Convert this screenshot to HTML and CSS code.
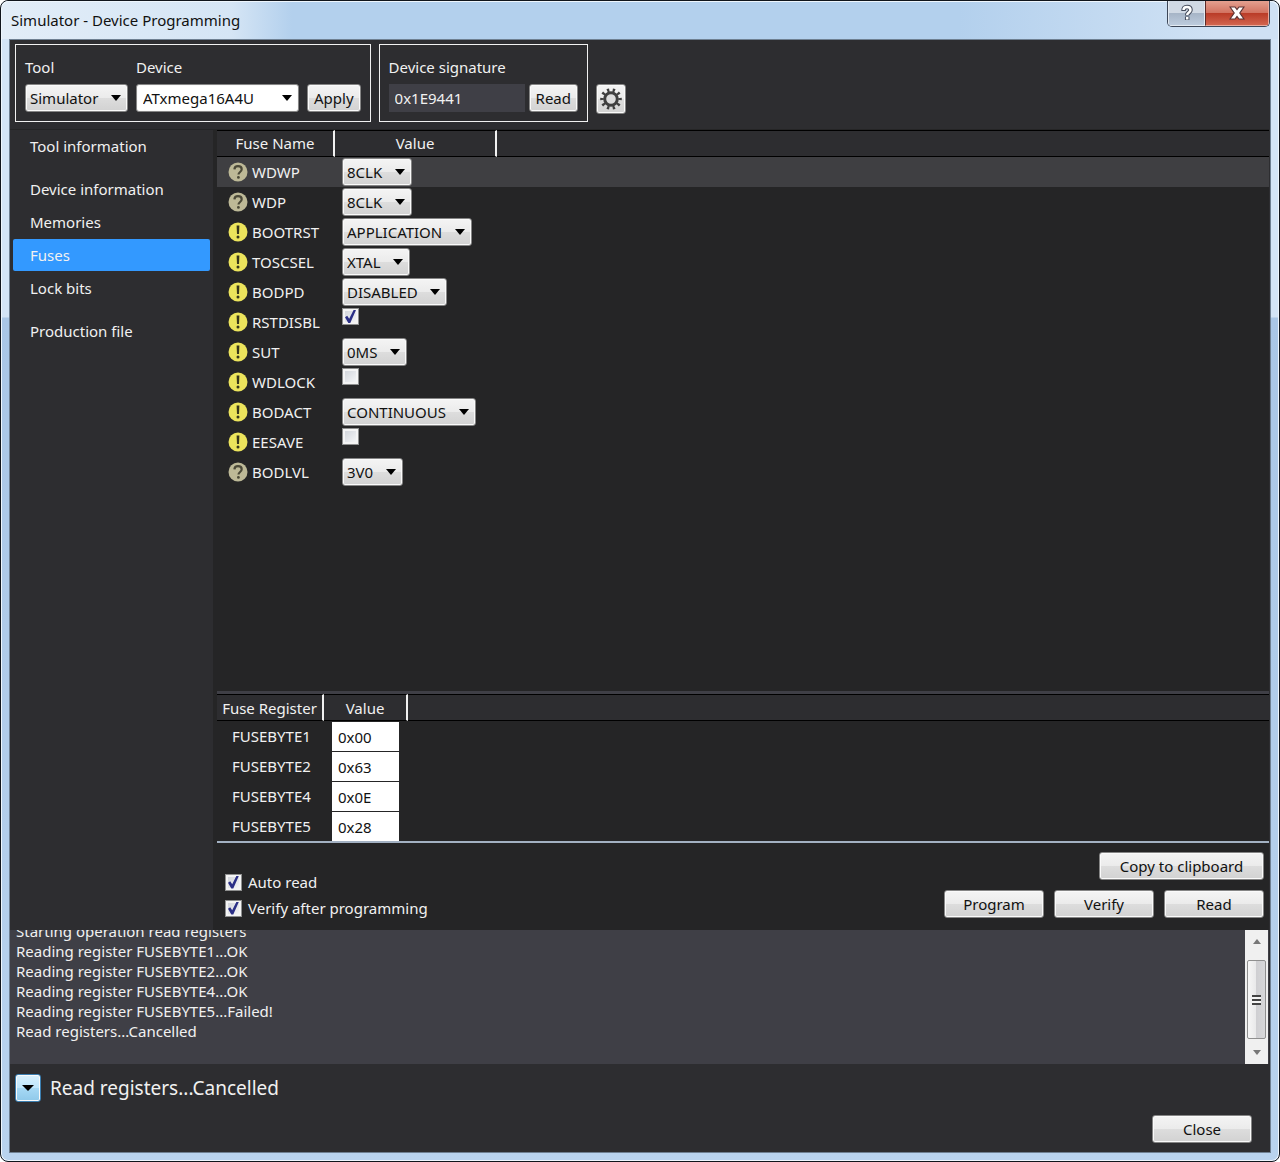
FILE: index.html
```
<!DOCTYPE html>
<html lang="en">
<head>
<meta charset="UTF-8">
<title>Simulator - Device Programming</title>
<link rel="stylesheet" href="styles.css">
</head>
<body>
	<svg class="defs" width="0" height="0">
		<symbol id="unknown" viewBox="0 0 20 20">
			<circle cx="10" cy="10" r="9.5" fill="#bdb997" />
			<path d="M6.4 7.4C6.5 5 8 4.2 10 4.2c2.2 0 3.7 1.2 3.7 3.1 0 2.7-3.2 2.7-3.2 5.2" fill="none" stroke="#4b4938" stroke-width="2.2" />
			<circle cx="10.4" cy="15.4" r="1.4" fill="#4b4938" />
		</symbol>
		<symbol id="warn" viewBox="0 0 20 20">
			<circle cx="10" cy="10" r="9.5" fill="#ece45c" />
			<path d="M8.6 3.500h2.800l-.4 8.500H9z" fill="#38361c" />
			<circle cx="10" cy="15" r="1.5" fill="#38361c" />
		</symbol>
	</svg>

	<div id="window">
		<header class="titlebar">
			<h1>Simulator - Device Programming</h1>
			<div class="caption">
				<button type="button" class="help" aria-label="Help">
					<svg width="16" height="18" viewBox="0 0 16 18">
						<path d="M4.5 7C4.5 4 6 3 8 3s3.500 1 3.500 3c0 2.500-3.300 2.300-3.300 5.500M8.200 12.500v3.500" fill="none" stroke="#454c5c" stroke-width="4.5" />
						<path d="M4.5 6C4.5 3.800 6 3 8 3s3.500 1 3.500 3c0 2.500-3.300 2.300-3.300 5M8.200 13v2.500" fill="none" stroke="#fff" stroke-width="2.5" />
					</svg>
				</button>
				<button type="button" class="exit" aria-label="Close window">
					<svg width="16" height="14" viewBox="0 0 16 14">
						<path d="M1 1h5l2 2.500L10 1h5l-4.200 6L15 13h-5l-2-2.500L6 13H1l4.200-6z" fill="#fff" stroke="#5d3434" stroke-width="1.2" />
					</svg>
				</button>
			</div>
		</header>

		<div id="content">
			<form class="toolbar">
				<div class="group">
					<div class="field">
						<label for="tool">Tool</label>
						<span class="combo"><select id="tool"><option>Simulator</option></select></span>
					</div>
					<div class="field">
						<label for="device">Device</label>
						<span class="combo edit"><select id="device"><option>ATxmega16A4U</option></select></span>
					</div>
					<button type="button">Apply</button>
				</div>
				<div class="group signature">
					<div class="field">
						<label for="signature">Device signature</label>
						<input type="text" id="signature" value="0x1E9441" readonly>
					</div>
					<button type="button">Read</button>
				</div>
				<button type="button" class="settings" aria-label="Settings">
					<svg width="24" height="24" viewBox="0 0 24 24" fill="none" stroke="#3f3f3f">
						<circle cx="12" cy="12" r="9" stroke-width="3.6" pathLength="20" stroke-dasharray="0.8 1.2" stroke-dashoffset="0.4" />
						<circle cx="12" cy="12" r="6.3" fill="#dcdcdc" stroke-width="3" />
					</svg>
				</button>
			</form>

			<div class="middle">
				<nav>
					<a href="#tool-info" class="last">Tool information</a>
					<a href="#device-info">Device information</a>
					<a href="#memories">Memories</a>
					<a href="#fuses" class="active">Fuses</a>
					<a href="#lock-bits" class="last">Lock bits</a>
					<a href="#production">Production file</a>
				</nav>

				<main>
					<div class="fuse-list">
						<table class="fuses">
							<thead>
								<tr><th>Fuse Name</th><th>Value</th><th class="rest"></th></tr>
							</thead>
							<tbody>
								<tr class="selected">
									<td><label for="wdwp"><svg><use href="#unknown" /></svg>WDWP</label></td>
									<td><span class="combo"><select id="wdwp"><option>8CLK</option></select></span></td>
									<td></td>
								</tr>
								<tr>
									<td><label for="wdp"><svg><use href="#unknown" /></svg>WDP</label></td>
									<td><span class="combo"><select id="wdp"><option>8CLK</option></select></span></td>
									<td></td>
								</tr>
								<tr>
									<td><label for="bootrst"><svg><use href="#warn" /></svg>BOOTRST</label></td>
									<td><span class="combo"><select id="bootrst"><option>APPLICATION</option></select></span></td>
									<td></td>
								</tr>
								<tr>
									<td><label for="toscsel"><svg><use href="#warn" /></svg>TOSCSEL</label></td>
									<td><span class="combo"><select id="toscsel"><option>XTAL</option></select></span></td>
									<td></td>
								</tr>
								<tr>
									<td><label for="bodpd"><svg><use href="#warn" /></svg>BODPD</label></td>
									<td><span class="combo"><select id="bodpd"><option>DISABLED</option></select></span></td>
									<td></td>
								</tr>
								<tr>
									<td><label for="rstdisbl"><svg><use href="#warn" /></svg>RSTDISBL</label></td>
									<td><input type="checkbox" id="rstdisbl" checked></td>
									<td></td>
								</tr>
								<tr>
									<td><label for="sut"><svg><use href="#warn" /></svg>SUT</label></td>
									<td><span class="combo"><select id="sut"><option>0MS</option></select></span></td>
									<td></td>
								</tr>
								<tr>
									<td><label for="wdlock"><svg><use href="#warn" /></svg>WDLOCK</label></td>
									<td><input type="checkbox" id="wdlock"></td>
									<td></td>
								</tr>
								<tr>
									<td><label for="bodact"><svg><use href="#warn" /></svg>BODACT</label></td>
									<td><span class="combo"><select id="bodact"><option>CONTINUOUS</option></select></span></td>
									<td></td>
								</tr>
								<tr>
									<td><label for="eesave"><svg><use href="#warn" /></svg>EESAVE</label></td>
									<td><input type="checkbox" id="eesave"></td>
									<td></td>
								</tr>
								<tr>
									<td><label for="bodlvl"><svg><use href="#unknown" /></svg>BODLVL</label></td>
									<td><span class="combo"><select id="bodlvl"><option>3V0</option></select></span></td>
									<td></td>
								</tr>
							</tbody>
						</table>
					</div>

					<div class="register-list">
						<table class="registers">
							<thead>
								<tr><th>Fuse Register</th><th>Value</th><th class="rest"></th></tr>
							</thead>
							<tbody>
								<tr>
									<td><label for="byte1">FUSEBYTE1</label></td>
									<td><input type="text" id="byte1" value="0x00"></td>
									<td></td>
								</tr>
								<tr>
									<td><label for="byte2">FUSEBYTE2</label></td>
									<td><input type="text" id="byte2" value="0x63"></td>
									<td></td>
								</tr>
								<tr>
									<td><label for="byte4">FUSEBYTE4</label></td>
									<td><input type="text" id="byte4" value="0x0E"></td>
									<td></td>
								</tr>
								<tr>
									<td><label for="byte5">FUSEBYTE5</label></td>
									<td><input type="text" id="byte5" value="0x28"></td>
									<td></td>
								</tr>
							</tbody>
						</table>
					</div>

					<div class="actions">
						<div class="options">
							<label><input type="checkbox" checked>Auto read</label>
							<label><input type="checkbox" checked>Verify after programming</label>
						</div>
						<div class="buttons">
							<button type="button" class="copy">Copy to clipboard</button>
							<div class="row">
								<button type="button">Program</button>
								<button type="button">Verify</button>
								<button type="button">Read</button>
							</div>
						</div>
					</div>
				</main>
			</div>

			<div class="log">
				<div class="lines">
					<p>Starting operation read registers</p>
					<p>Reading register FUSEBYTE1...OK</p>
					<p>Reading register FUSEBYTE2...OK</p>
					<p>Reading register FUSEBYTE4...OK</p>
					<p>Reading register FUSEBYTE5...Failed!</p>
					<p>Read registers...Cancelled</p>
				</div>
				<div class="scrollbar">
					<span class="up"></span>
					<span class="thumb"><i></i></span>
					<span class="down"></span>
				</div>
			</div>

			<div class="status">
				<button type="button" class="toggle" aria-label="Toggle log"></button>
				<span>Read registers...Cancelled</span>
			</div>
			<footer>
				<button type="button">Close</button>
			</footer>
		</div>
	</div>
</body>
</html>
```
FILE: styles.css
```
* {
	box-sizing: border-box;
}

body {
	margin: 0;
	background-color: #fff;
	color: #f1f1f1;
	font-family: "Noto Sans", "Open Sans", sans-serif;
	font-size: 15px;
	line-height: 20px;
}

.defs {
	position: absolute;
}

#window {
	display: flex;
	flex-direction: column;
	min-height: 100vh;
	padding: 0 8px 8px;
	border: 1px solid #10151c;
	border-radius: 8px;
	background: linear-gradient(#d3e4f6 0, #d3e4f6 316px, #a9c6e6 317px, #b9d3ee 100%);
	box-shadow: inset 0 0 0 1px #eef6fd;
}

/* title bar */
.titlebar {
	display: flex;
	justify-content: space-between;
	height: 38px;
	margin: 0 -7px;
	padding: 0 8px 0 9px;
	border-radius: 7px 7px 0 0;
	background: linear-gradient(90deg, #e2edf8 0, #d5e5f5 230px, #b3d0ed 290px, #b3d0ed 75%, #cfe1f4 95%);
	box-shadow: inset 0 1px #eef6fd;
}

h1 {
	margin: 0;
	color: #111;
	font-size: 15px;
	font-weight: normal;
	line-height: 38px;
}

.caption {
	display: flex;
	height: 26px;
	border: 1px solid #3c4657;
	border-top: none;
	border-radius: 0 0 5px 5px;
	overflow: hidden;
}

.caption button {
	height: 25px;
	min-width: 0;
	padding: 0;
	border: 1px solid #e3eaf2;
	border-top: none;
	border-radius: 0;
	box-shadow: none;
}

.caption .help {
	width: 37px;
	background: linear-gradient(#d0d9e4 50%, #a6b4c6 50%, #bccbdd);
}

.caption .exit {
	width: 64px;
	border-color: #eaa99b;
	border-left-color: #5a2a28;
	background: linear-gradient(#e4a090, #d27260 50%, #b93a26 50%, #d2654f);
}

/* controls */
button,
select {
	height: 28px;
	border: 1px solid #858585;
	border-radius: 3px;
	background: linear-gradient(#f4f4f4, #ebebeb 50%, #dddddd 50%, #d2d2d2);
	box-shadow: inset 0 0 0 1px #fafafa;
	color: #111;
	font: inherit;
	line-height: 20px;
}

button {
	display: flex;
	align-items: center;
	justify-content: center;
	min-width: 100px;
	padding: 0;
}

.combo {
	display: inline-grid;
	align-items: center;
	vertical-align: top;
}

.combo select,
.combo::after {
	grid-area: 1 / 1;
}

.combo select {
	appearance: none;
	padding: 0 28px 0 4px;
}

.combo::after {
	content: "";
	justify-self: end;
	margin-right: 7px;
	border: 5px solid transparent;
	border-top: 6px solid #000;
	border-bottom: none;
	pointer-events: none;
}

.edit select {
	width: 163px;
	padding-left: 6px;
	background: #fff;
}

input[type="text"] {
	height: 28px;
	padding: 0 6px;
	border: none;
	color: #111;
	font: inherit;
}

input[type="checkbox"] {
	appearance: none;
	display: grid;
	place-items: center;
	flex: none;
	width: 17px;
	height: 17px;
	margin: 0;
	border: 1px solid #8e8f8f;
	background: linear-gradient(135deg, #cdd1d8, #fafafa);
	box-shadow: inset 0 0 0 2px #f4f4f4;
}

input[type="checkbox"]:checked::before {
	content: "";
	width: 11px;
	height: 13px;
	background-color: #2b2f86;
	clip-path: polygon(0 55%, 20% 45%, 38% 68%, 78% 0, 100% 0, 48% 100%, 30% 100%);
}

/* content */
#content {
	display: flex;
	flex: 1;
	flex-direction: column;
	padding-right: 1px;
	border: 1px solid #6f8092;
	background-color: #2d2d30;
}

.toolbar {
	display: flex;
	align-items: flex-end;
	gap: 8px;
	height: 90px;
	padding: 4px 5px 7px;
	border-bottom: 1px solid #252526;
}

.group {
	display: flex;
	align-items: flex-end;
	gap: 8px;
	height: 78px;
	padding: 0 9px 9px;
	border: 1px solid #f1f1f1;
}

.signature {
	gap: 4px;
}

.field {
	display: flex;
	flex-direction: column;
	gap: 7px;
}

.group button {
	min-width: 0;
	padding: 0 6px;
}

.field input[type="text"] {
	width: 136px;
	background-color: #3f3f46;
	color: #f1f1f1;
}

.toolbar .settings {
	width: 30px;
	height: 30px;
	min-width: 0;
	margin-bottom: 8px;
}

.middle {
	display: flex;
	flex: 1;
}

nav {
	display: flex;
	flex-direction: column;
	gap: 1px;
	flex: none;
	width: 203px;
	padding: 0 3px;
}

nav a {
	height: 32px;
	padding-left: 17px;
	border-radius: 2px;
	color: #f1f1f1;
	line-height: 32px;
	text-decoration: none;
}

nav .last {
	margin-bottom: 10px;
}

nav .active {
	background-color: #3399ff;
}

main {
	display: flex;
	flex: 1;
	flex-direction: column;
	padding-left: 4px;
	background-color: #252526;
}

.fuse-list {
	flex: 1;
	border-bottom: 3px solid #3f3f46;
}

table {
	width: 100%;
	border-collapse: separate;
	border-spacing: 0;
	table-layout: fixed;
}

th {
	height: 27px;
	padding: 0;
	border-top: 1px solid #000;
	border-bottom: 1px solid #000;
	border-right: 2px solid #f1f1f1;
	background-color: #2d2d30;
	font-weight: normal;
}

th.rest {
	width: auto;
	border-right: none;
}

td {
	height: 30px;
	padding: 0;
	vertical-align: top;
}

.selected {
	background-color: #3f3f42;
}

.fuses th {
	padding-bottom: 2px;
}

.fuses th:nth-child(1) {
	width: 118px;
}

.fuses th:nth-child(2) {
	width: 162px;
}

.fuses td:nth-child(2) {
	padding: 1px 0 0 7px;
}

.fuses label {
	display: flex;
	align-items: center;
	gap: 4px;
	height: 30px;
	padding-left: 11px;
}

.fuses label svg {
	flex: none;
	width: 20px;
	height: 20px;
}

.registers th:nth-child(1) {
	width: 107px;
}

.registers th:nth-child(2) {
	width: 84px;
}

.registers td:nth-child(2) {
	padding: 1px 0 0 8px;
}

.registers label {
	display: block;
	padding-left: 15px;
	line-height: 30px;
}

.registers input {
	display: block;
	width: 67px;
	height: 29px;
}

.register-list {
	border-bottom: 2px solid #a3b1c2;
}

.actions {
	display: flex;
	align-items: flex-end;
	justify-content: space-between;
	height: 87px;
	padding: 0 5px 9px 8px;
}

.options label {
	display: flex;
	align-items: center;
	gap: 6px;
	height: 26px;
}

.buttons {
	display: flex;
	flex-direction: column;
	align-items: flex-end;
	gap: 10px;
	padding-bottom: 3px;
}

.buttons .row {
	display: flex;
	gap: 10px;
}

.copy {
	width: 165px;
}

/* output log */
.log {
	display: flex;
	height: 134px;
	padding-right: 1px;
	background-color: #3f3f46;
}

.lines {
	display: flex;
	flex: 1;
	flex-direction: column;
	justify-content: flex-end;
	overflow: hidden;
	padding: 0 6px 23px;
}

.lines p {
	flex: none;
	margin: 0;
}

.scrollbar {
	display: flex;
	flex-direction: column;
	align-items: center;
	width: 23px;
	padding: 9px 0;
	background-color: #f0f0f0;
}

.scrollbar .up,
.scrollbar .down {
	border: 4px solid transparent;
}

.scrollbar .up {
	border-top: none;
	border-bottom: 5px solid #777;
}

.scrollbar .down {
	border-top: 5px solid #777;
	border-bottom: none;
}

.thumb {
	display: flex;
	flex: 1;
	align-items: center;
	justify-content: center;
	width: 19px;
	margin: 16px 0 11px;
	border: 1px solid #8f8f8f;
	border-radius: 2px;
	background: linear-gradient(90deg, #f6f6f6, #e8e8e9 50%, #cfcfd2 50%, #d8d8da);
}

.thumb i {
	width: 9px;
	height: 10px;
	background: repeating-linear-gradient(#444 0, #444 2px, #f4f4f4 2px, #f4f4f4 4px);
}

/* bottom */
.status {
	display: flex;
	align-items: center;
	gap: 9px;
	height: 47px;
	padding-left: 5px;
	font-size: 19px;
}

.toggle {
	width: 26px;
	min-width: 0;
	border-color: #3c7fb1;
	background: linear-gradient(#d9f0fc, #bee6fd 50%, #a7d9f5 50%, #8fc9ea);
}

.toggle::before {
	content: "";
	border: 6px solid transparent;
	border-top: 6px solid #000;
	border-bottom: none;
}

footer {
	display: flex;
	justify-content: flex-end;
	padding: 4px 17px 9px;
}
```
